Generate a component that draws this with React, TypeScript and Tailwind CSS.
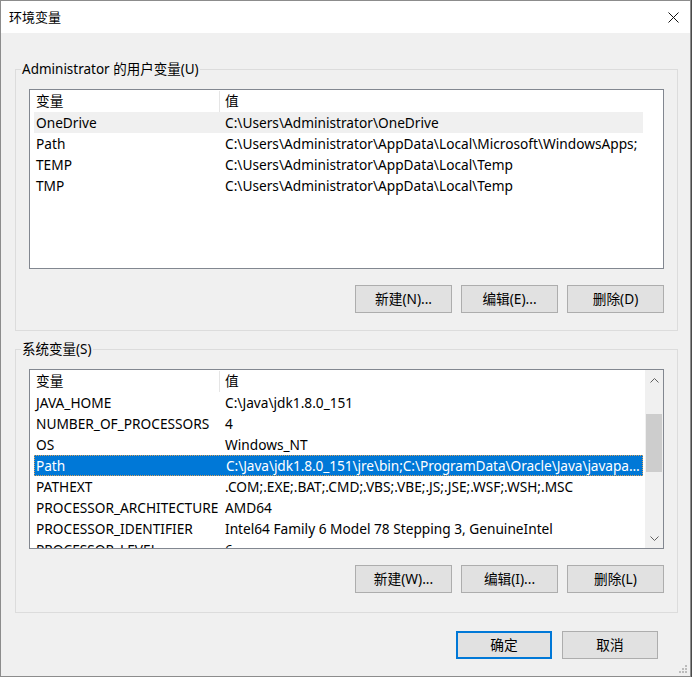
type Row = { name: string; value: string }

const userVars: Row[] = [
  { name: 'OneDrive', value: 'C:\\Users\\Administrator\\OneDrive' },
  { name: 'Path', value: 'C:\\Users\\Administrator\\AppData\\Local\\Microsoft\\WindowsApps;' },
  { name: 'TEMP', value: 'C:\\Users\\Administrator\\AppData\\Local\\Temp' },
  { name: 'TMP', value: 'C:\\Users\\Administrator\\AppData\\Local\\Temp' },
]

const sysVars: Row[] = [
  { name: 'JAVA_HOME', value: 'C:\\Java\\jdk1.8.0_151' },
  { name: 'NUMBER_OF_PROCESSORS', value: '4' },
  { name: 'OS', value: 'Windows_NT' },
  { name: 'Path', value: 'C:\\Java\\jdk1.8.0_151\\jre\\bin;C:\\ProgramData\\Oracle\\Java\\javapa...' },
  { name: 'PATHEXT', value: '.COM;.EXE;.BAT;.CMD;.VBS;.VBE;.JS;.JSE;.WSF;.WSH;.MSC' },
  { name: 'PROCESSOR_ARCHITECTURE', value: 'AMD64' },
  { name: 'PROCESSOR_IDENTIFIER', value: 'Intel64 Family 6 Model 78 Stepping 3, GenuineIntel' },
  { name: 'PROCESSOR_LEVEL', value: '6' },
]

const font = "font-['Noto_Sans','Noto_Sans_CJK_SC',sans-serif]"

function WinButton({ label, primary, w = 'w-[97px]' }: { label: string; primary?: boolean; w?: string }) {
  return (
    <button
      className={
        'h-[28px] bg-[#e1e1e1] text-[13.7px] text-black ' +
        w +
        ' ' +
        (primary ? 'border-2 border-[#0078d7]' : 'border border-[#adadad]')
      }
    >
      {label}
    </button>
  )
}

function Chevron({ up }: { up?: boolean }) {
  return (
    <svg width="9" height="5" viewBox="0 0 9 5" fill="none">
      <polyline
        points={up ? '0.5,4.5 4.5,0.5 8.5,4.5' : '0.5,0.5 4.5,4.5 8.5,0.5'}
        stroke="#606060"
        strokeWidth="1"
      />
    </svg>
  )
}

function VarList({ rows, hover, selected, scroll }: { rows: Row[]; hover?: number; selected?: number; scroll?: boolean }) {
  return (
    <div className="flex h-[180px] border border-[#828790] bg-white overflow-hidden">
      <div className="flex-1 overflow-hidden">
        <div className="flex h-[22px] w-[613px] items-center pt-[1px] text-[13.7px]">
          <div className="flex h-full w-[190px] items-center border-r border-[#e5e5e5] pl-[6px]">变量</div>
          <div className="pl-[5px]">值</div>
        </div>
        <div className="ml-[4px] w-[609px]">
          {rows.map((r, i) => {
            const sel = i === selected
            const hov = i === hover
            return (
              <div
                key={r.name}
                className={
                  'flex h-[21px] items-center whitespace-nowrap pt-[1px] text-[13.7px] ' +
                  (sel
                    ? 'bg-[#0078d7] text-white border border-dotted border-[#d9a25d] tracking-[-0.08px]'
                    : hov
                      ? 'bg-[#f0f0f0] text-black'
                      : 'text-black')
                }
              >
                <div className={'w-[186px] ' + (sel ? 'pl-[1px]' : 'pl-[2px]')}>{r.name}</div>
                <div className="pl-[5px]">{r.value}</div>
              </div>
            )
          })}
        </div>
      </div>
      {scroll && (
        <div className="flex w-[18px] flex-col bg-[#f0f0f0]">
          <div className="flex h-[20px] items-center justify-center">
            <Chevron up />
          </div>
          <div className="mx-[1px] mt-[24px] h-[58px] bg-[#cdcdcd]" />
          <div className="flex-1" />
          <div className="flex h-[20px] items-center justify-center">
            <Chevron />
          </div>
        </div>
      )}
    </div>
  )
}

function Group({ title, children }: { title: string; children: React.ReactNode }) {
  return (
    <fieldset className="w-[663px] border border-[#dcdcdc]">
      <legend className="ml-[5px] px-[1px] text-[13.5px] leading-[18px] text-black">{title}</legend>
      {children}
    </fieldset>
  )
}

export default function App() {
  return (
    <div className={'h-[677px] w-[692px] bg-[#4a4a4a] ' + font}>
      <div className="relative flex h-[677px] w-[691px] flex-col border border-[#8c8c8c] bg-[#f0f0f0]">
        <div className="flex h-[32px] items-center justify-between bg-white pl-[8px] pr-[11px] pt-[1px]">
          <span className="text-[13px] text-black">环境变量</span>
          <svg width="11" height="11" viewBox="0 0 11 11" fill="none">
            <path d="M0.5 0.5 L10.5 10.5 M10.5 0.5 L0.5 10.5" stroke="#111" strokeWidth="1" />
          </svg>
        </div>

        <div className="pl-[14px] pt-[27px]">
          <Group title="Administrator 的用户变量(U)">
            <div className="px-[13px] pb-[17px] pt-[11px]">
              <VarList rows={userVars} hover={0} />
              <div className="mt-[16px] flex justify-end gap-[9px]">
                <WinButton label="新建(N)..." />
                <WinButton label="编辑(E)..." />
                <WinButton label="删除(D)" />
              </div>
            </div>
          </Group>

          <div className="mt-[9px]">
            <Group title="系统变量(S)">
              <div className="px-[13px] pb-[19px] pt-[11px]">
                <VarList rows={sysVars} selected={3} scroll />
                <div className="mt-[16px] flex justify-end gap-[9px]">
                  <WinButton label="新建(W)..." />
                  <WinButton label="编辑(I)..." />
                  <WinButton label="删除(L)" />
                </div>
              </div>
            </Group>
          </div>

          <div className="mt-[18px] flex w-[643px] justify-end gap-[10px]">
            <WinButton label="确定" primary w="w-[96px]" />
            <WinButton label="取消" w="w-[96px]" />
          </div>
        </div>

        <svg className="absolute bottom-[2px] right-[2px]" width="10" height="10" viewBox="0 0 10 10">
          <rect x="7" y="1" width="2" height="2" fill="#bcbcbc" />
          <rect x="4" y="4" width="2" height="2" fill="#bcbcbc" />
          <rect x="7" y="4" width="2" height="2" fill="#bcbcbc" />
          <rect x="1" y="7" width="2" height="2" fill="#bcbcbc" />
          <rect x="4" y="7" width="2" height="2" fill="#bcbcbc" />
          <rect x="7" y="7" width="2" height="2" fill="#bcbcbc" />
        </svg>
      </div>
    </div>
  )
}
